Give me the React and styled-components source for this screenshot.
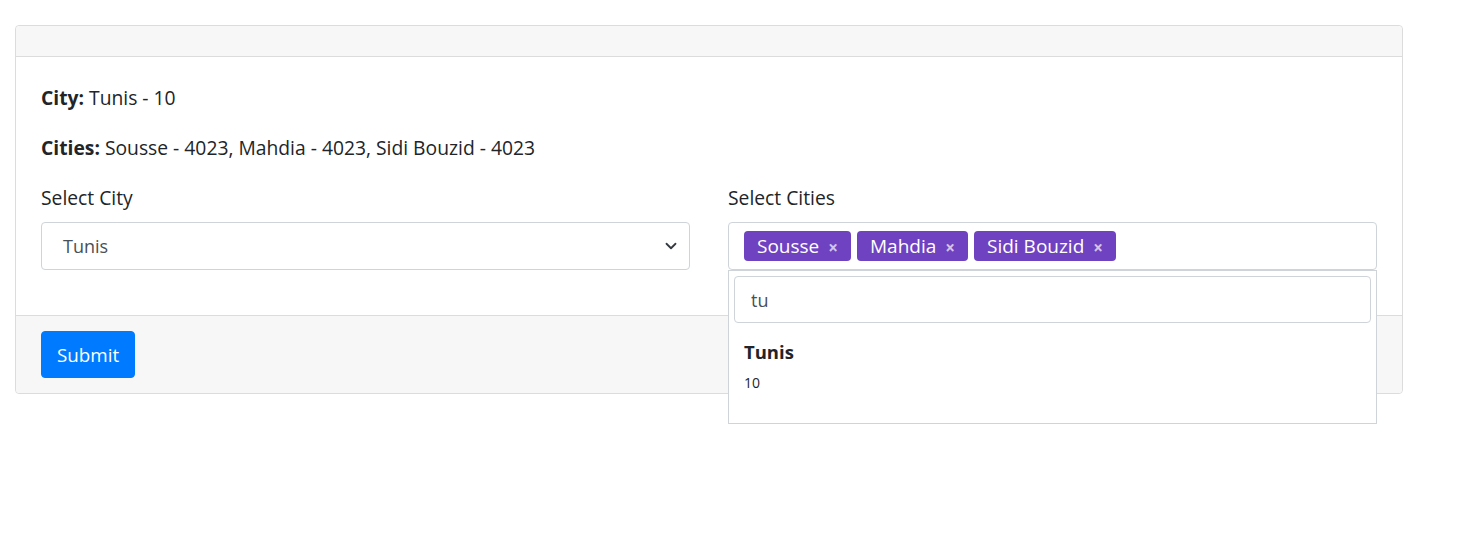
import React from "react";
import styled, { createGlobalStyle } from "styled-components";

const Global = createGlobalStyle`
  html, body { margin: 0; padding: 0; background: #fff; }
  body {
    font-family: "Open Sans", "Noto Sans", "Liberation Sans", sans-serif;
    color: #212529;
    font-size: 19.3px;
    line-height: 30px;
  }
  * { box-sizing: border-box; }
`;

const Page = styled.div`
  padding: 25px 60px 0 15px;
  min-height: 550px;
`;

const Card = styled.div`
  position: relative;
  border: 1px solid #dcdcdc;
  border-radius: 4px;
  width: 1388px;
`;

const CardHeader = styled.div`
  height: 31px;
  background: #f7f7f7;
  border-bottom: 1px solid #dcdcdc;
  border-radius: 4px 4px 0 0;
`;

const CardBody = styled.div`
  padding: 26px 25px 45px 25px;
`;

const Line = styled.p`
  margin: 0 0 20px 0;
  font-size: 19.3px;
  line-height: 30px;
`;

const Row = styled.div`
  display: grid;
  grid-template-columns: 1fr 1fr;
  column-gap: 38px;
`;

const Group = styled.div`
  position: relative;
  display: flex;
  flex-direction: column;
  gap: 9px;
`;

const Label = styled.label`
  font-size: 19.3px;
  line-height: 30px;
`;

const SelectBox = styled.div`
  height: 48px;
  border: 1px solid #ced4da;
  border-radius: 4px;
  display: flex;
  align-items: center;
  justify-content: space-between;
  padding: 0 12px 0 21px;
  font-size: 18px;
  color: #495057;
`;

const MultiBox = styled.div`
  height: 48px;
  border: 1px solid #ced4da;
  border-radius: 4px;
  display: flex;
  align-items: center;
  gap: 6px;
  padding: 0 15px;
`;

const Tag = styled.span`
  display: inline-flex;
  align-items: center;
  gap: 9px;
  height: 30px;
  padding: 1px 13px 0 13px;
  background: #6f42c1;
  color: #fff;
  border-radius: 4px;
  font-size: 19px;
  line-height: 29px;
`;

const TagX = styled.span`
  color: rgba(255, 255, 255, 0.7);
  font-size: 17px;
  font-weight: 700;
  line-height: 1;
  margin-top: 1px;
`;

const Dropdown = styled.div`
  position: absolute;
  left: 0;
  right: 0;
  top: 87px;
  height: 154px;
  background: #fff;
  border: 1px solid #ced4da;
  padding: 5px;
  z-index: 2;
`;

const Search = styled.div`
  height: 47px;
  border: 1px solid #ced4da;
  border-radius: 4px;
  display: flex;
  align-items: center;
  padding: 0 16px;
  font-size: 18px;
  color: #495057;
`;

const Option = styled.div`
  padding: 14px 10px 0 10px;
  display: flex;
  flex-direction: column;
`;

const OptionTitle = styled.strong`
  font-size: 18.5px;
  line-height: 30px;
  font-weight: 700;
  color: #212529;
`;

const OptionSub = styled.small`
  font-size: 14px;
  line-height: 24px;
  margin-top: 4px;
`;

const CardFooter = styled.div`
  background: #f7f7f7;
  border-top: 1px solid #dcdcdc;
  padding: 15px 25px 15px 25px;
  border-radius: 0 0 4px 4px;
`;

const Button = styled.button`
  height: 47px;
  padding: 0 15px;
  background: #007bff;
  border: 1px solid #007bff;
  border-radius: 4px;
  color: #fff;
  font-family: inherit;
  font-size: 18.8px;
  cursor: pointer;
`;

const Chevron = () => (
  <svg width="12" height="12" viewBox="0 0 16 16" aria-hidden="true">
    <path d="M2 5l6 6 6-6" fill="none" stroke="#343a40" strokeWidth="2.4" strokeLinecap="round" strokeLinejoin="round" />
  </svg>
);

const tags = ["Sousse", "Mahdia", "Sidi Bouzid"];

export default function App() {
  return (
    <>
      <Global />
      <Page>
        <Card>
          <CardHeader />
          <CardBody>
            <Line><b>City:</b> Tunis - 10</Line>
            <Line><b>Cities:</b> Sousse - 4023, Mahdia - 4023, Sidi Bouzid - 4023</Line>
            <Row>
              <Group>
                <Label>Select City</Label>
                <SelectBox>
                  <span>Tunis</span>
                  <Chevron />
                </SelectBox>
              </Group>
              <Group>
                <Label>Select Cities</Label>
                <MultiBox>
                  {tags.map((t) => (
                    <Tag key={t}>
                      {t}
                      <TagX>×</TagX>
                    </Tag>
                  ))}
                </MultiBox>
                <Dropdown>
                  <Search>tu</Search>
                  <Option>
                    <OptionTitle>Tunis</OptionTitle>
                    <OptionSub>10</OptionSub>
                  </Option>
                </Dropdown>
              </Group>
            </Row>
          </CardBody>
          <CardFooter>
            <Button>Submit</Button>
          </CardFooter>
        </Card>
      </Page>
    </>
  );
}
